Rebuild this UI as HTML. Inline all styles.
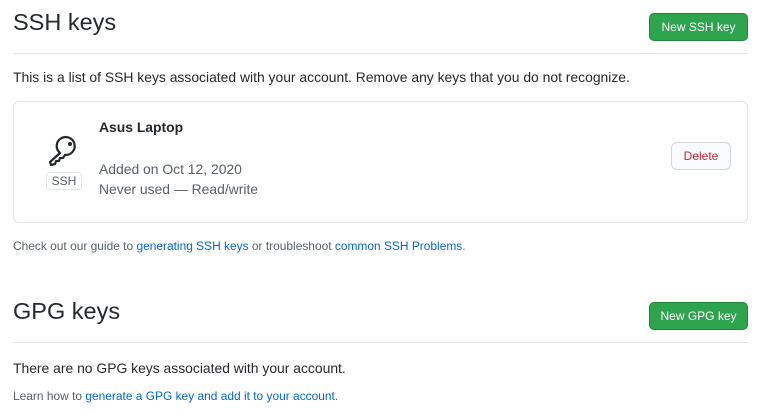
<!DOCTYPE html>
<html><head><style>
body{margin:0;background:#fff;font-family:"Liberation Sans",sans-serif;color:#24292e;width:767px;height:418px;position:relative;overflow:hidden}
.a{position:absolute}
h2{position:absolute;margin:0;font-weight:400;font-size:23.5px;left:13px}
.hr{position:absolute;left:13px;width:735px;height:1px;background:#e1e4e8}
.btn{position:absolute;left:649px;width:99px;height:28px;box-sizing:border-box;background:#2ea44f;border:1px solid #22863a;border-radius:5px;color:#fff;font-size:12px;text-align:center;line-height:26px}
a{color:#0366d6;text-decoration:none}
</style></head><body>
<h2 style="top:9px">SSH keys</h2>
<div class="btn" style="top:13px">New SSH key</div>
<div class="hr" style="top:53px"></div>
<div class="a" style="left:13px;top:69px;font-size:13.9px">This is a list of SSH keys associated with your account. Remove any keys that you do not recognize.</div>
<div class="a" style="left:13px;top:101px;width:735px;height:122px;box-sizing:border-box;border:1px solid #e1e4e8;border-radius:6px"></div>
<svg class="a" style="left:46px;top:132px" width="36" height="36" viewBox="0 0 36 34"><g fill="none" stroke="#24292e" stroke-width="2.2" stroke-linejoin="round"><path d="M14 20 L4 29 L5 32 L9 31 L10 28 L13 28 L14 25 L17 25 L19 22 A9 9 0 1 0 14 20 Z"/><circle cx="24" cy="11" r="2" fill="#24292e" stroke="none"/></g></svg>
<div class="a" style="left:46px;top:172px;width:36px;height:18px;box-sizing:border-box;border:1px solid #e1e4e8;border-radius:4px;font-size:12px;color:#586069;text-align:center;line-height:16px">SSH</div>
<div class="a" style="left:99px;top:119px;font-size:13.9px;font-weight:700">Asus Laptop</div>
<div class="a" style="left:99px;top:159px;font-size:13.9px;color:#586069;line-height:20px">Added on Oct 12, 2020<br>Never used — Read/write</div>
<div class="a" style="left:671px;top:142px;width:60px;height:28px;box-sizing:border-box;border:1px solid #d1d5da;border-radius:6px;background:#fafbfc;color:#cb2431;font-size:12px;text-align:center;line-height:26px">Delete</div>
<div class="a" style="left:13px;top:239px;font-size:11.95px;color:#586069">Check out our guide to <a>generating SSH keys</a> or troubleshoot <a>common SSH Problems</a>.</div>
<h2 style="top:298px">GPG keys</h2>
<div class="btn" style="top:302px">New GPG key</div>
<div class="hr" style="top:342px"></div>
<div class="a" style="left:13px;top:360px;font-size:13.9px">There are no GPG keys associated with your account.</div>
<div class="a" style="left:13px;top:389px;font-size:11.95px;color:#586069">Learn how to <a>generate a GPG key and add it to your account</a>.</div>
</body></html>
